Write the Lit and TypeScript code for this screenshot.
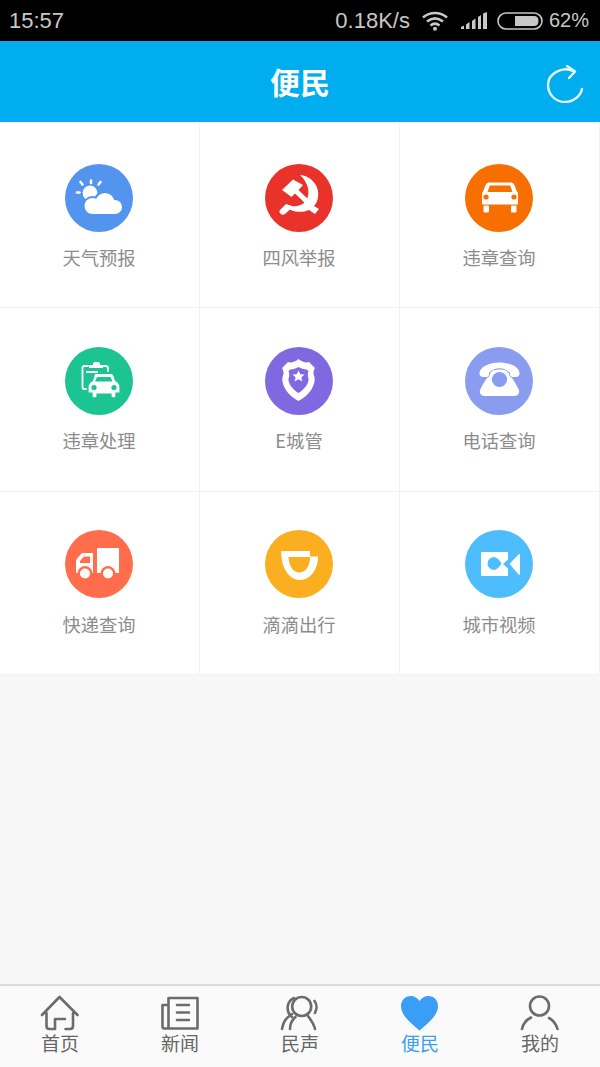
import { LitElement, css, html, svg } from 'lit';
import { customElement } from 'lit/decorators.js';

const ICONS: Record<string, unknown> = {
    weather: svg`
        <circle cx="25" cy="29" r="7.4" fill="#fff"/>
        <g fill="#5394ee">
            <circle cx="27.5" cy="42" r="10"/><circle cx="40" cy="38.5" r="11.5"/><circle cx="50" cy="43" r="9"/>
        </g>
        <g fill="#fff">
            <circle cx="27.5" cy="42" r="8"/><circle cx="40" cy="38.5" r="9.5"/><circle cx="50" cy="43" r="7"/>
            <rect x="27" y="42" width="23" height="8"/>
        </g>
        <g stroke="#fff" stroke-width="2.6" stroke-linecap="round">
            <path d="M15.5 18 L17.5 20.5"/><path d="M26 16.5 V19"/><path d="M35.5 18 L33.5 20.5"/><path d="M12 28.5 H14.5"/>
        </g>`,
    party: svg`
        <g fill="#fff">
            <path d="M35 11 C47 12 55 23 53 33 C52.5 37 51 40 49 42 L54 45 L50 50 L44 46 C37 49 29 48 25 45.5 L20 50 C17 52 13 49 15 46 L21 40 L24 41 C30 43.5 37 42 41 37 C46 29 43 18 35 11 Z"/>
            <path d="M17 26 L28 15.5 L38 21 L33.5 26 L46 38 L42.5 41.5 L30 29.5 L26.5 33 Z"/>
        </g>`,
    car: svg`
        <g fill="#fff">
            <path d="M24 18.5 H46 Q48.5 18.5 49.5 21 L51.5 26.5 Q53 28.5 53 31 V40.5 H17 V31 Q17 28.5 18.5 26.5 L20.5 21 Q21.5 18.5 24 18.5 Z"/>
            <rect x="18.5" y="41.5" width="5.5" height="7" rx="1"/><rect x="46" y="41.5" width="5.5" height="7" rx="1"/>
        </g>
        <g fill="#f76f00">
            <path d="M25 21.5 H45 L47.5 28 H22.5 Z"/>
            <circle cx="21" cy="33" r="2.6"/><circle cx="49" cy="33" r="2.6"/>
        </g>`,
    ticket: svg`
        <path d="M21 42 H19.5 Q17.5 42 17.5 40 V21 Q17.5 19 19.5 19 H23 M37 19 H40 Q43 19 43 21 V24" fill="none" stroke="#fff" stroke-width="1.8" stroke-linecap="round"/>
        <g fill="#fff">
            <path d="M28 16.5 Q28 15 30 15 H33 Q35 15 35 17 V18 H38 V21 H24 V18 H28 Z"/>
            <rect x="21" y="24" width="12" height="2"/>
            <path stroke="#1cc493" stroke-width="1.2" d="M30 26.5 H46 Q48 26.5 49 29 L50.5 33.5 Q55 36 55 40 V46 H51 V50 Q48 52 46 50 V47 H32 V50 Q29 52 27 50 V46 H23 V40 Q23 36 27.5 33.5 L29 29 Q29 26.5 30 26.5 Z"/>
        </g>
        <g fill="#1cc493">
            <path d="M32 30 H45.5 L47.5 34.5 H30 Z"/>
            <circle cx="29" cy="40.5" r="2.6"/><circle cx="49" cy="40.5" r="2.6"/>
        </g>`,
    badge: svg`
        <path fill-rule="evenodd" fill="#fff" d="M33.5 12 C37 15 41 16 44 15 L50 21 C48 24 48 27 49.5 30 C51 38 44 49 33.5 54 C23 49 16 38 17.5 30 C19 27 19 24 17 21 L23 15 C26 16 30 15 33.5 12 Z M33.5 20 C31 21.5 28 22.5 25.5 22.5 L23.5 24 C24.5 26.5 24.5 29 23.5 31.5 C23 36 27 42 33.5 46 C40 42 44 36 43.5 31.5 C42.5 29 42.5 26.5 43.5 24 L41.5 22.5 C39 22.5 36 21.5 33.5 20 Z"/>
        <path fill="#fff" d="M33.5 23.5 L35.3 27.3 L39.5 27.6 L36.4 30.4 L37.4 34.5 L33.5 32.3 L29.6 34.5 L30.6 30.4 L27.5 27.6 L31.7 27.3 Z"/>`,
    phone: svg`
        <path fill="#fff" d="M27 24 C30 22 39 22 42 24 C47 30 51 37 54 43 Q55 49 49 49 H20 Q14 49 15 43 C18 37 22 30 27 24 Z"/>
        <path fill="#fff" stroke="#8a9cf0" stroke-width="1.4" paint-order="stroke" d="M14.5 27 C14 20 24 15.5 34.5 15.5 C45 15.5 55 20 54.5 27 Q54 30 51 30 L47.5 30 Q45 30 45 27 L45 26 C40 19.5 29 19.5 24 26 L24 27 Q24 30 21.5 30 L18 30 Q15 30 14.5 27 Z"/>
        <circle cx="34.5" cy="32.5" r="7.6" fill="#8a9cf0"/>`,
    truck: svg`
        <g fill="#fff">
            <path d="M32 19 Q32 18 33 18 H54 V43 H32 Z"/>
            <path fill-rule="evenodd" d="M18 23 H28 V43 H11 V32 Q11 29.5 13 27.5 L16 24 Q17 23 18 23 Z M19 26.5 L15 31 V33 H25 V26.5 Z"/>
        </g>
        <circle cx="20" cy="43.5" r="7.4" fill="#ff6d4b"/>
        <circle cx="43" cy="43.5" r="7.4" fill="#ff6d4b"/>
        <circle cx="20" cy="43.5" r="5" fill="#fff"/>
        <circle cx="43" cy="43.5" r="5" fill="#fff"/>`,
    didi: svg`
        <path fill="#fff" fill-rule="evenodd" d="M16 21 H45 V26.5 H53 C53 40 45 50 35 50 C24 50 17 38 16.5 26 Z M23.5 27 C24 36 28 42.5 34.5 42.5 C40.5 42.5 45 36 45 27 Z"/>`,
    video: svg`
        <path fill="#fff" fill-rule="evenodd" d="M16 22 H43 V29.5 L38 34 L43 38.5 V46 H16 Z M29 27 A6.5 6.5 0 1 0 29 40 C32 40 35 36 36.5 33.5 C35 31 32 27 29 27 Z"/>
        <path fill="#fff" d="M45 33.5 L54 24 Q55 24 55 25 V44 Q55 45 54 45 L45 34.5 Z"/>`,
};

const TAB_ICONS: Record<string, unknown> = {
    home: svg`<path d="M2 22 L19.5 4 L37.5 22 M6.5 20 V33 Q6.5 36 9.5 36 H15 V26 H25 M25.5 36 H30 Q33 36 33 33 V20"/>`,
    news: svg`<path d="M8.5 34 V5 H37.5 V35.5 H4 Q2.5 35.5 2.5 33 V12 H8.5"/><path d="M17 12 H29 M17 19.5 H29 M17 27 H29"/>`,
    voice: svg`
        <circle cx="21.7" cy="13.5" r="9.5"/>
        <path d="M12 24 C5 18 7 8 14 5 M34.5 8 C37 11 37 16 35 20"/>
        <path d="M2 36 C3 29 7 24 12 21 M10 36 C10 31 12 27 15.5 24 M28 23 C31 27 34 31 35 36"/>`,
    user: svg`
        <circle cx="19.5" cy="13" r="9.5"/>
        <path d="M2 36 C3 31 6 27 11 24.5 M29 25 C33 27 36 31 37.5 36"/>`,
};

type Service = { label: string; icon: string; color: string };

const SERVICES: Service[] = [
    { label: "天气预报", icon: "weather", color: "#5394ee" },
    { label: "四风举报", icon: "party", color: "#e8322a" },
    { label: "违章查询", icon: "car", color: "#f76f00" },
    { label: "违章处理", icon: "ticket", color: "#1cc493" },
    { label: "E城管", icon: "badge", color: "#8069e0" },
    { label: "电话查询", icon: "phone", color: "#8a9cf0" },
    { label: "快递查询", icon: "truck", color: "#ff6d4b" },
    { label: "滴滴出行", icon: "didi", color: "#fbae20" },
    { label: "城市视频", icon: "video", color: "#4dbdfd" },
];

const TABS = [
    { label: "首页", icon: "home" },
    { label: "新闻", icon: "news" },
    { label: "民声", icon: "voice" },
    { label: "便民", icon: "heart" },
    { label: "我的", icon: "user" },
];

@customElement("app-root")
export class AppRoot extends LitElement {

    static styles = css`

    :host {
        display: flex;
        flex-direction: column;
        width: 600px;
        height: 1067px;
        overflow: hidden;
        background: #f7f7f7;
        font-family: "Liberation Sans", "Noto Sans CJK SC", sans-serif;
    }

    .status {
        flex: none;
        height: 41px;
        padding: 0 11px 0 9px;
        box-sizing: border-box;
        display: flex;
        align-items: center;
        background: #000;
        color: #c8c8c8;
        font-size: 22px;
    }

    .status .clock {
        margin-right: auto;
    }

    .status .speed {
        margin-right: 12px;
    }

    .status .wifi {
        margin-right: 13px;
    }

    .status .signal {
        margin-right: 10px;
    }

    .status .battery {
        margin-right: 6px;
    }

    .status .level {
        font-size: 20px;
    }

    .header {
        flex: none;
        height: 81px;
        position: relative;
        display: flex;
        align-items: center;
        justify-content: center;
        padding-bottom: 2px;
        box-sizing: border-box;
        background: #00adef;
        color: #fff;
        font-family: "Noto Sans CJK SC", sans-serif;
        font-size: 30px;
        font-weight: 700;
    }

    .refresh {
        position: absolute;
        right: 16px;
        top: 24px;
    }

    .grid {
        flex: none;
        display: grid;
        grid-template-columns: repeat(3, 200px);
        grid-template-rows: 186px 184px 183px;
        background: #fff;
    }

    .cell {
        box-sizing: border-box;
        padding: 42px 1px 0 0;
        display: flex;
        flex-direction: column;
        align-items: center;
        border-right: 1px solid #f3f3f3;
        border-bottom: 1px solid #f1f1f1;
        color: #8c8c8c;
        font-family: "Noto Sans CJK SC", sans-serif;
        font-size: 18.3px;
        line-height: 26px;
    }

    .cell:nth-child(n+4) {
        padding-top: 39px;
    }

    .cell:nth-child(n+7) {
        padding-top: 38px;
    }

    .cell svg {
        display: block;
        margin-bottom: 12px;
    }

    .cell:nth-child(n+7) svg {
        margin-bottom: 13px;
    }

    .spacer {
        flex: 1;
    }

    .tabs {
        flex: none;
        height: 83px;
        box-sizing: border-box;
        display: grid;
        grid-template-columns: repeat(5, 120px);
        background: #fafafa;
        border-top: 2px solid #dcdcdc;
    }

    .tab {
        display: flex;
        flex-direction: column;
        align-items: center;
        padding-top: 7px;
        color: #666;
        font-family: "Noto Sans CJK SC", sans-serif;
        font-size: 19px;
        line-height: 24px;
    }

    .tab.active {
        color: #3a9df6;
    }

    .tab span {
        margin-top: -2px;
    }

    .tab svg {
        display: block;
        fill: none;
        stroke: #6c6c6c;
        stroke-width: 2.6;
        stroke-linecap: round;
        stroke-linejoin: round;
    }

    `;

    renderTabIcon(icon: string) {
        if (icon === "heart") {
            return html`<svg width="40" height="40" viewBox="0 0 40 40" style="fill:#3a9df6;stroke:none">
                <path d="M19.5 37.5 C12 31 1 23 1 13 C1 7 5.5 3 10.5 3 C14.5 3 17.5 5 19.5 8 C21.5 5 24.5 3 28.5 3 C33.5 3 38 7 38 13 C38 23 27 31 19.5 37.5 Z"/>
            </svg>`;
        }
        return html`<svg width="40" height="40" viewBox="0 0 40 40">${TAB_ICONS[icon]}</svg>`;
    }

    render() {

        return html`
            <div class="status">
                <span class="clock">15:57</span>
                <span class="speed">0.18K/s</span>
                <svg class="wifi" width="26" height="20" viewBox="0 0 26 20" fill="none" stroke="#c8c8c8" stroke-width="2.6">
                    <path d="M1 6.5 C8 0.5 18 0.5 25 6.5"/>
                    <path d="M5 10.5 C10 6.5 16 6.5 21 10.5"/>
                    <path d="M8.5 14.5 C11.5 12 14.5 12 17.5 14.5"/>
                    <circle cx="13" cy="17.8" r="2" fill="#c8c8c8" stroke="none"/>
                </svg>
                <svg class="signal" width="26" height="17" viewBox="0 0 26 17" fill="#c8c8c8">
                    <path d="M0 17 V15 L3 13.5 V17 Z"/>
                    <path d="M5 17 V12.5 L8.5 10 V17 Z"/>
                    <path d="M11 17 V9 L14.5 6.5 V17 Z"/>
                    <path d="M17 17 V5 L20 3 V17 Z"/>
                    <path d="M22 17 V1.5 L26 0 V17 Z"/>
                </svg>
                <svg class="battery" width="46" height="18" viewBox="0 0 46 18">
                    <rect x="1" y="1" width="44" height="16" rx="8" fill="none" stroke="#c8c8c8" stroke-width="1.6"/>
                    <path d="M18 4 H37 Q41.5 4 41.5 9 Q41.5 14 37 14 H18 Z" fill="#c8c8c8"/>
                </svg>
                <span class="level">62%</span>
            </div>

            <div class="header">
                便民
                <svg class="refresh" width="38" height="38" viewBox="0 0 38 38" fill="none" stroke="#e6f7fe" stroke-width="2.4" stroke-linecap="round" stroke-linejoin="round">
                    <path d="M27 6 C17 1 2 8 2 20 C2 30 10 37 19 37 C28 37 35 30 36 24"/>
                    <path d="M21 1 L29 6.5 L23 13"/>
                </svg>
            </div>

            <div class="grid">
                ${SERVICES.map((item) => html`
                    <div class="cell">
                        <svg width="68" height="68" viewBox="0 0 68 68">
                            <circle cx="34" cy="34" r="34" fill=${item.color}></circle>
                            ${ICONS[item.icon]}
                        </svg>
                        <span>${item.label}</span>
                    </div>
                `)}
            </div>

            <div class="spacer"></div>

            <div class="tabs">
                ${TABS.map((tab) => html`
                    <div class="tab ${tab.icon === "heart" ? "active" : ""}">
                        ${this.renderTabIcon(tab.icon)}
                        <span>${tab.label}</span>
                    </div>
                `)}
            </div>
        `;

    }

}
